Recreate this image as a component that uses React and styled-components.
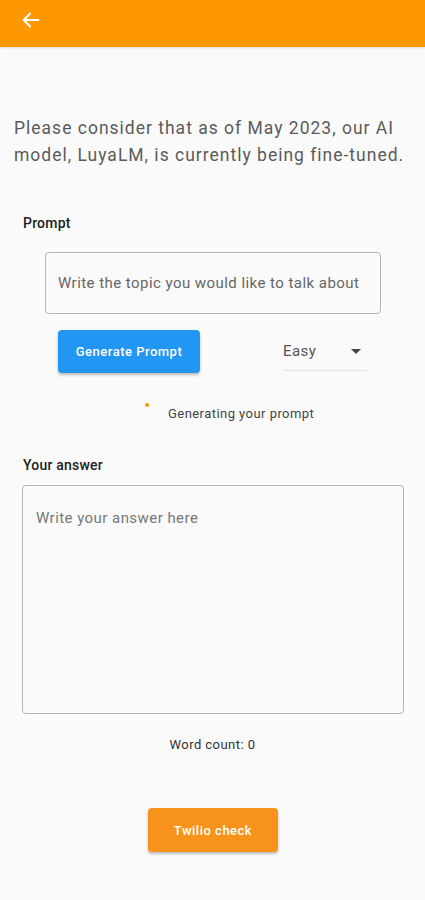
import React from 'react';
import styled, { createGlobalStyle } from 'styled-components';

const Global = createGlobalStyle`
  html, body {
    margin: 0;
    padding: 0;
    background: #fafafa;
    font-family: Roboto, "Noto Sans", sans-serif;
  }
`;

const Page = styled.div`
  width: 425px;
  min-height: 900px;
  background: #fafafa;
  display: flex;
  flex-direction: column;
  letter-spacing: 0.45px;
`;

const AppBar = styled.header`
  height: 47px;
  background: #ff9800;
  display: flex;
  align-items: center;
  padding-left: 20px;
  box-shadow: 0 1px 2px rgba(0, 0, 0, 0.15);
`;

const BackButton = styled.button`
  border: none;
  background: none;
  padding: 0;
  display: flex;
  margin-top: -8px;
`;

const Content = styled.main`
  display: flex;
  flex-direction: column;
  padding: 68px 0 0;
`;

const Notice = styled.p`
  margin: 0 0 0 14px;
  font-size: 17.5px;
  line-height: 27px;
  color: #5a5a5a;
  letter-spacing: 1px;
`;

const Label = styled.div`
  margin: ${p => p.$top}px 0 0 23px;
  font-size: 14px;
  font-weight: 500;
  color: #222;
  letter-spacing: 0.2px;
`;

const TopicInput = styled.div`
  margin: 21px 0 0 45px;
  width: 336px;
  height: 62px;
  box-sizing: border-box;
  border: 1px solid #b5b5b5;
  border-radius: 4px;
  display: flex;
  align-items: center;
  padding-left: 12px;
  font-size: 15px;
  color: #666;
  white-space: nowrap;
`;

const ControlsRow = styled.div`
  display: flex;
  align-items: center;
  margin: 16px 0 0 58px;
`;

const Button = styled.button`
  border: none;
  border-radius: 4px;
  background: ${p => p.$bg};
  color: #fff;
  font-family: Roboto, sans-serif;
  font-size: 13px;
  font-weight: 500;
  letter-spacing: 0.5px;
  width: ${p => p.$w}px;
  height: ${p => p.$h}px;
  box-shadow: 0 2px 3px rgba(0, 0, 0, 0.25);
`;

const Select = styled.div`
  margin-left: 83px;
  width: 84px;
  height: 39px;
  box-sizing: border-box;
  border-bottom: 1px solid #e3e3e3;
  display: flex;
  align-items: center;
  justify-content: space-between;
  padding-right: 6px;
  font-size: 15px;
  color: #555;
`;

const Caret = styled.span`
  width: 0;
  height: 0;
  border-left: 5px solid transparent;
  border-right: 5px solid transparent;
  border-top: 5px solid #444;
`;

const StatusRow = styled.div`
  display: flex;
  align-items: flex-start;
  margin: 28px 0 0 145px;
`;

const Dot = styled.span`
  width: 4px;
  height: 4px;
  border-radius: 50%;
  background: #ff9800;
  margin-top: 2px;
`;

const StatusText = styled.span`
  margin: 5px 0 0 19px;
  font-size: 13px;
  color: #444;
`;

const AnswerBox = styled.div`
  margin: 12px 0 0 22px;
  width: 382px;
  height: 229px;
  box-sizing: border-box;
  border: 1px solid #b5b5b5;
  border-radius: 4px;
  padding: 23px 0 0 13px;
  font-size: 15px;
  color: #777;
`;

const WordCount = styled.div`
  margin-top: 23px;
  text-align: center;
  font-size: 13px;
  color: #333;
`;

const Footer = styled.div`
  display: flex;
  justify-content: center;
  margin-top: 56px;
  padding-left: 1px;
`;

export default function App() {
  return (
    <Page>
      <Global />
      <AppBar>
        <BackButton aria-label="back">
          <svg width="22" height="22" viewBox="0 0 24 24" fill="none" stroke="#fff" strokeWidth="2.2" strokeLinecap="round" strokeLinejoin="round">
            <path d="M20 12H4" />
            <path d="M11 5l-7 7 7 7" />
          </svg>
        </BackButton>
      </AppBar>
      <Content>
        <Notice>
          Please consider that as of May 2023, our AI model, LuyaLM, is currently being fine-tuned.
        </Notice>
        <Label $top={46}>Prompt</Label>
        <TopicInput>Write the topic you would like to talk about</TopicInput>
        <ControlsRow>
          <Button $bg="#2196f3" $w={142} $h={43}>Generate Prompt</Button>
          <Select>
            Easy
            <Caret />
          </Select>
        </ControlsRow>
        <StatusRow>
          <Dot />
          <StatusText>Generating your prompt</StatusText>
        </StatusRow>
        <Label $top={36}>Your answer</Label>
        <AnswerBox>Write your answer here</AnswerBox>
        <WordCount>Word count: 0</WordCount>
        <Footer>
          <Button $bg="#f7931a" $w={130} $h={44}>Twilio check</Button>
        </Footer>
      </Content>
    </Page>
  );
}
